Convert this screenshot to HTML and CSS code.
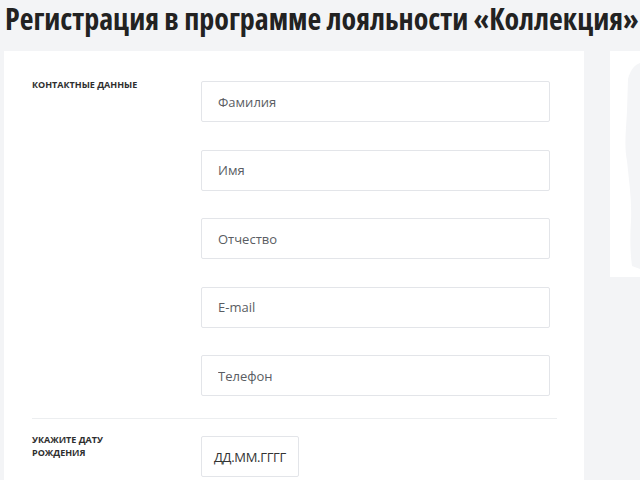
FILE: index.html
```
<!DOCTYPE html>
<html lang="ru">
<head>
<meta charset="UTF-8" />
<meta name="viewport" content="width=device-width, initial-scale=1" />
<title>Регистрация в программе лояльности «Коллекция»</title>
<link rel="stylesheet" href="styles.css">
</head>
<body>
  <h1 class="page-title">Регистрация в программе лояльности «Коллекция»</h1>
  <div class="layout">
    <form class="reg-card" novalidate>
      <div class="section">
        <div class="section-label">Контактные данные</div>
        <div class="fields">
          <input type="text" name="lastname" placeholder="Фамилия" />
          <input type="text" name="firstname" placeholder="Имя" />
          <input type="text" name="middlename" placeholder="Отчество" />
          <input type="email" name="email" placeholder="E-mail" />
          <input type="tel" name="phone" placeholder="Телефон" />
        </div>
      </div>
      <div class="section section-birth">
        <div class="section-label">Укажите дату рождения</div>
        <div class="fields">
          <input type="text" name="birthdate" class="date-input" value="ДД.ММ.ГГГГ" />
        </div>
      </div>
    </form>
    <aside class="promo">
      <svg class="promo-figure" viewBox="0 0 30 226" aria-hidden="true">
        <path d="M30 12 C24 14 20 20 18 28 L17 60 C16 80 14 95 17 110 C19 130 22 150 21 170 C20 185 20 200 22 215 L30 218 Z" fill="#f4f5f7"/>
      </svg>
    </aside>
  </div>
</body>
</html>
```
FILE: styles.css
```
:root {
  --color-bg: #f3f4f6;
  --color-text: #2b2b2b;
  --input-border: #e3e5e9;
  --placeholder: #5a5d63;
  --font-family: 'Open Sans', 'Noto Sans', sans-serif;
}
* {
  box-sizing: border-box;
}
body {
  margin: 0;
  background: var(--color-bg);
  font-family: var(--font-family);
  color: var(--color-text);
  overflow: hidden;
}
.page-title {
  margin: 0;
  padding: 1px 0 0 5px;
  height: 51px;
  font-family: 'Open Sans', sans-serif;
  font-stretch: 76%;
  font-weight: 700;
  font-size: 30px;
  line-height: 36px;
  color: #222;
  white-space: nowrap;
}
.layout {
  display: flex;
  align-items: flex-start;
  gap: 26px;
  padding-left: 4px;
}
.reg-card {
  background: #fff;
  width: 580px;
  flex: none;
  padding: 30px 27px 0 28px;
  min-height: 430px;
}
.section {
  display: flex;
}
.section-label {
  width: 169px;
  flex: none;
  margin-top: -3px;
  font-size: 9px;
  font-weight: 700;
  line-height: 13px;
  text-transform: uppercase;
  color: #2e2e2e;
  padding-right: 60px;
}
.fields {
  display: flex;
  flex-direction: column;
  gap: 27.5px;
  width: 349px;
}
.section-birth {
  margin-top: 22px;
  border-top: 1px solid #eceef0;
  padding-top: 17px;
}
input {
  display: block;
  width: 349px;
  height: 41px;
  padding: 0 16px;
  border: 1px solid var(--input-border);
  border-radius: 2px;
  font-family: var(--font-family);
  font-size: 13px;
  color: var(--color-text);
  background: #fff;
  outline: none;
}
input::placeholder {
  color: var(--placeholder);
}
.date-input {
  width: 98px;
  padding: 0 8px;
  text-align: center;
  letter-spacing: -0.3px;
  color: #333;
}
.promo {
  width: 40px;
  height: 226px;
  background: #fff;
  flex: none;
}
.promo-figure {
  display: block;
  width: 30px;
  height: 226px;
}
```
